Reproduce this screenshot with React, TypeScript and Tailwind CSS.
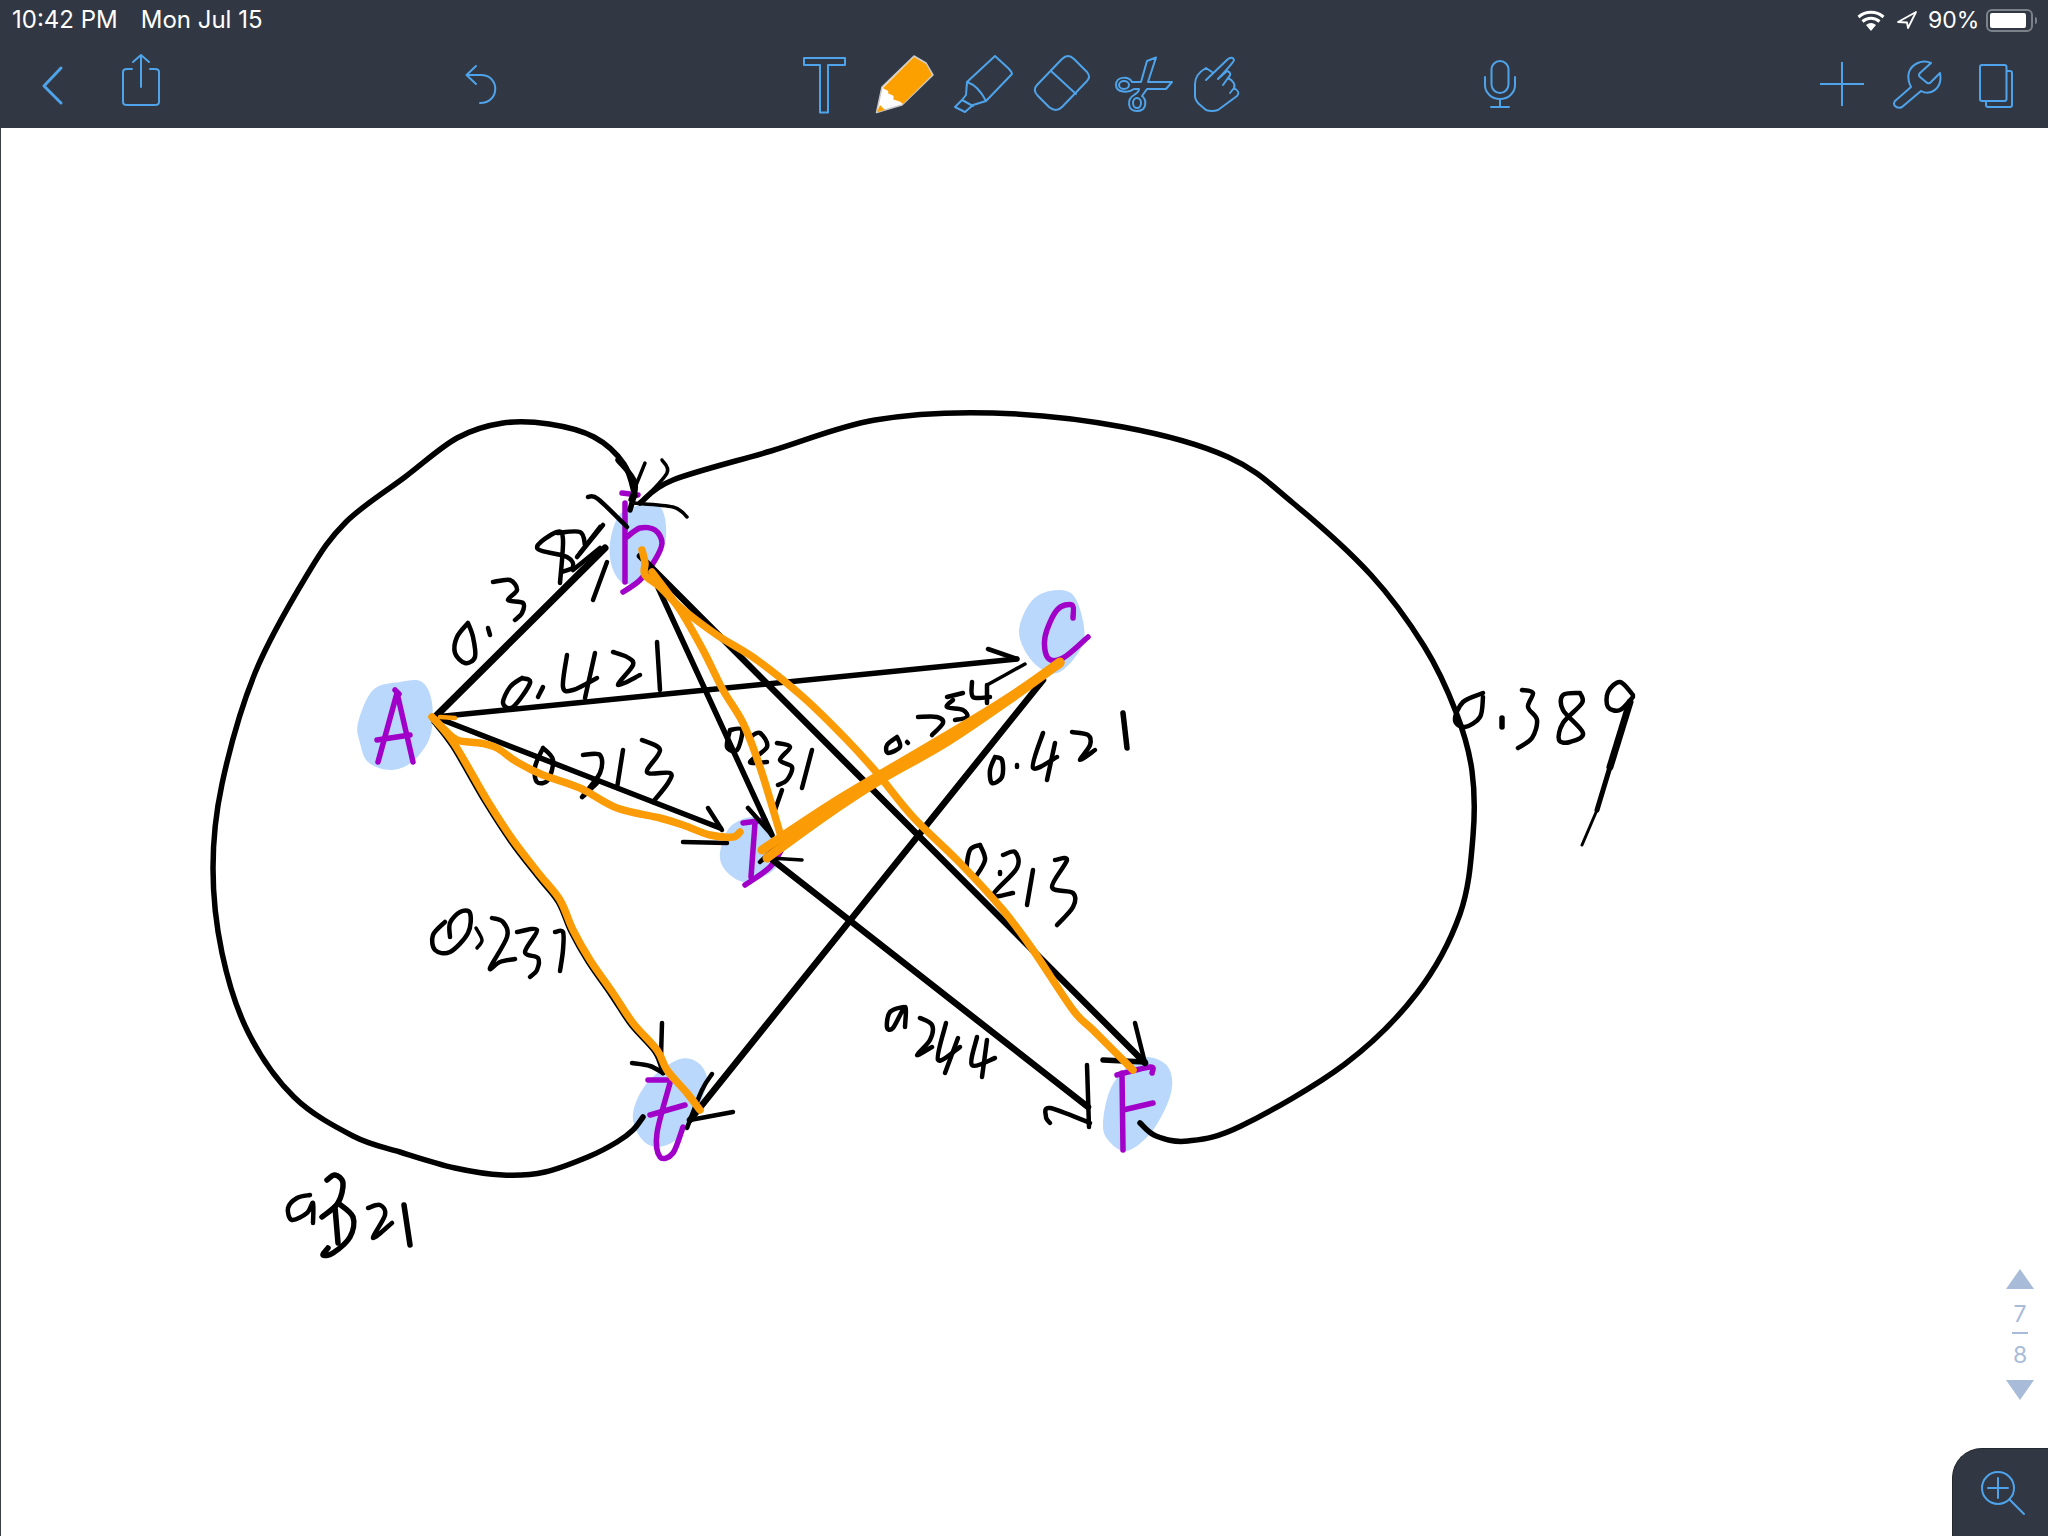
type P = [number, number];
const smooth = (p: P[], close = false): string => {
  const n = p.length;
  const at = (i: number): P => (close ? p[(i + n) % n] : p[Math.max(0, Math.min(n - 1, i))]);
  let d = `M${p[0][0]} ${p[0][1]}`;
  const end = close ? n : n - 1;
  for (let i = 0; i < end; i++) {
    const a = at(i - 1), b = at(i), c = at(i + 1), e = at(i + 2);
    const k = 6;
    d += ` C${(b[0] + (c[0] - a[0]) / k).toFixed(1)} ${(b[1] + (c[1] - a[1]) / k).toFixed(1)} ${(c[0] - (e[0] - b[0]) / k).toFixed(1)} ${(c[1] - (e[1] - b[1]) / k).toFixed(1)} ${c[0]} ${c[1]}`;
  }
  return close ? d + "Z" : d;
};

const blobs: P[][] = [
  [[358,723],[373,690],[400,682],[422,682],[432,703],[430,737],[412,762],[390,770],[368,762],[360,743]],
  [[610,543],[618,517],[633,507],[660,507],[666,537],[655,560],[640,580],[623,583],[612,567]],
  [[1019,633],[1030,603],[1050,591],[1073,595],[1084,627],[1080,650],[1057,673],[1033,662]],
  [[720,853],[730,827],[753,817],[770,827],[780,860],[763,877],[743,882],[725,870]],
  [[633,1113],[647,1083],[677,1060],[697,1062],[707,1080],[697,1110],[680,1137],[657,1147],[640,1137]],
  [[1103,1123],[1110,1090],[1127,1067],[1147,1057],[1168,1067],[1171,1093],[1153,1130],[1127,1151],[1108,1140]],
];

const edges: [P[], number][] = [
  [[[635,496],[624,464],[594,437],[549,424],[503,423],[457,438],[405,477],[346,522],[307,575],[255,673],[222,784],[213,868],[222,953],[248,1032],[294,1097],[353,1136],[400,1152],[455,1168],[503,1175],[545,1172],[590,1156],[617,1142],[633,1130],[643,1117]],5.5],
  [[[640,503],[673,480],[771,451],[875,420],[993,413],[1123,427],[1228,457],[1293,503],[1371,575],[1424,646],[1456,712],[1472,771],[1473,836],[1460,914],[1417,993],[1345,1064],[1241,1126],[1188,1141],[1156,1136],[1140,1123]],5.5],
  [[[435,717],[605,548]],7],
  [[[435,717],[1017,659]],5.5],
  [[[435,717],[720,828]],5.5],
  [[[434,722],[453,747],[485,802],[511,842],[538,877],[558,902],[571,932],[588,962],[611,995],[631,1025],[655,1052],[663,1073]],5],
  [[[1043,680],[690,1120]],6.5],
  [[[650,570],[772,835]],5.5],
  [[[640,556],[1145,1063]],6.5],
  [[[770,858],[1088,1107]],6.5],
  [[[760,862],[833,812]],3],
];

const ink: [P[], number][] = [
  [[[600,527],[580,553]],4.5],[[[607,562],[593,600]],4.5],
  [[[988,649],[1017,659]],4.5],[[[1025,664],[987,685]],3.5],
  [[[708,808],[722,830]],4.5],[[[683,842],[727,843]],4.5],
  [[[662,1023],[661,1057]],4.5],[[[632,1063],[650,1066],[663,1073]],4.5],
  [[[712,1074],[702,1090],[687,1128]],4.5],[[[733,1112],[690,1120]],4.5],
  [[[748,808],[772,835]],4.5],[[[800,823],[760,862]],4.5],[[[802,860],[770,858]],3.5],
  [[[1135,1023],[1145,1063]],4.5],[[[1103,1060],[1145,1062]],5.5],
  [[[1087,1065],[1089,1127]],4.5],[[[1050,1123],[1046,1117],[1050,1108],[1090,1123]],4.5],
  [[[588,497],[598,499],[627,527]],4.5],[[[618,460],[635,483],[630,510]],5.5],[[[645,463],[630,500]],3.5],
  [[[662,460],[667,473],[643,500]],3.5],[[[633,503],[673,507],[687,517]],3.5],
  [[[468,623],[457,637],[455,653],[465,663],[475,657],[473,637],[468,623]],4.5],[[[488,628],[490,635]],4.5],
  [[[493,582],[510,580],[517,590],[508,600],[523,603],[522,613],[515,620]],4.5],
  [[[560,583],[563,540],[557,532],[537,548],[567,557],[573,567],[562,572]],4.5],
  [[[557,533],[580,532],[585,545]],4.5],[[[603,525],[577,557]],4.5],[[[573,570],[600,548]],4.5],
  [[[522,678],[510,687],[503,703],[513,707],[530,683],[522,678]],4.5],[[[543,687],[538,697]],4.5],
  [[[567,655],[563,687],[573,690],[597,678]],4.5],[[[595,653],[585,698]],4.5],
  [[[613,652],[627,657],[633,665],[618,685],[640,675]],4.5],[[[657,642],[660,690]],4.5],
  [[[543,748],[535,767],[537,782],[548,780],[553,760],[543,748]],4.5],[[[563,767],[566,768]],4.5],
  [[[583,755],[600,755],[600,773],[582,797],[597,783]],4.5],[[[623,750],[617,788]],4.5],
  [[[642,740],[660,750],[647,772],[670,773],[668,783],[653,802]],4.5],
  [[[730,730],[727,747],[737,750],[742,730],[730,730]],4.5],
  [[[750,737],[760,733],[767,747],[750,762],[767,762]],4.5],
  [[[777,743],[790,747],[780,760],[792,767],[787,780],[778,785]],4.5],
  [[[812,750],[802,788]],4.5],[[[782,790],[775,810]],4.5],
  [[[897,737],[887,745],[888,753],[900,747],[897,737]],4.5],[[[907,742],[908,743]],4.5],
  [[[918,717],[937,717],[943,723],[932,735]],4.5],
  [[[953,700],[947,707],[963,710],[967,717],[955,720]],4.5],[[[947,697],[963,693]],4.5],
  [[[972,682],[973,697],[990,697]],4.5],[[[987,685],[987,703]],4.5],
  [[[995,757],[990,770],[992,783],[1002,777],[1002,760],[995,757]],4.5],[[[1017,765],[1017,767]],4.5],
  [[[1043,733],[1033,768],[1057,757]],4.5],[[[1055,743],[1047,780]],4.5],
  [[[1072,732],[1088,735],[1090,745],[1080,760],[1095,750]],4.5],[[[1123,713],[1127,748]],5.5],
  [[[980,845],[970,850],[967,870],[975,878]],4.5],[[[980,845],[985,860],[975,878]],4.5],[[[1000,872],[1000,874]],4.5],
  [[[1003,855],[1015,852],[1017,868],[993,895],[1013,893]],4.5],[[[1033,870],[1027,905]],4.5],
  [[[1055,860],[1067,860],[1052,887],[1073,893],[1073,907],[1057,925]],4.5],
  [[[903,1007],[890,1012],[887,1027],[893,1028],[905,1007],[905,1027]],4.5],
  [[[920,1018],[932,1025],[930,1040],[917,1055],[932,1047]],4.5],
  [[[946,1023],[938,1060],[960,1047]],4.5],[[[958,1038],[945,1073]],4.5],
  [[[977,1037],[972,1065],[995,1058]],4.5],[[[987,1040],[982,1077]],4.5],
  [[[445,922],[433,935],[435,950],[450,952],[468,933],[470,913],[460,912],[450,923],[450,937]],4.5],
  [[[476,928],[482,940],[477,948]],3.5],
  [[[492,918],[503,922],[507,937],[490,968],[500,962],[515,959]],4.5],
  [[[517,932],[537,930],[525,952],[538,958],[537,970],[530,977]],4.5],
  [[[555,932],[563,932],[563,950],[560,971]],4.5],
  [[[1483,693],[1463,702],[1455,720],[1465,727],[1480,717],[1483,697]],4.5],[[[1502,718],[1502,727]],5.5],
  [[[1522,690],[1533,693],[1528,707],[1537,720],[1532,738],[1518,748]],4.5],
  [[[1580,693],[1563,695],[1563,710],[1583,733],[1570,742],[1559,740],[1563,723],[1582,703],[1580,693]],4.5],
  [[[1633,695],[1620,682],[1608,692],[1608,707],[1620,710],[1633,697]],4.5],
  [[[1630,702],[1610,767]],7],[[[1610,767],[1597,810]],5],[[[1597,810],[1582,845]],3],
  [[[310,1195],[297,1198],[288,1208],[292,1220],[307,1213],[313,1203],[313,1223]],4.5],
  [[[327,1180],[335,1175],[343,1183],[338,1203],[322,1217]],5.5],
  [[[338,1203],[353,1217],[350,1237],[333,1253],[323,1255],[328,1248]],5.5],[[[335,1207],[338,1243]],5.5],
  [[[368,1208],[380,1205],[385,1215],[373,1238],[392,1223]],4.5],[[[404,1205],[410,1245]],5.5],
];

const purple: P[][] = [
  [[395,690],[399,694]],[[397,693],[378,762]],[[398,697],[413,762]],[[377,740],[410,735]],
  [[625,503],[625,582]],[[622,493],[638,495]],[[627,537],[640,528],[655,530],[662,543],[655,560],[640,580],[623,592]],
  [[1073,618],[1072,605],[1057,610],[1045,637],[1048,658],[1063,658],[1088,637]],
  [[743,823],[765,820]],[[755,823],[751,877]],[[745,885],[770,867],[783,847]],
  [[648,1080],[667,1080]],[[670,1083],[657,1133],[660,1157],[673,1153],[683,1127]],[[650,1115],[685,1105]],
  [[1122,1073],[1123,1150]],[[1117,1075],[1150,1067],[1152,1073]],[[1123,1110],[1153,1103]],
];

const orange: [P[], number][] = [
  [[[642,550],[645,563],[645,575],[660,587],[680,607],[717,635],[757,660],[803,697],[847,740],[877,773],[913,817],[960,863],[1003,910],[1033,950],[1073,1010],[1093,1030],[1133,1070]],7.5],
  [[[652,572],[680,610],[703,650],[723,690],[743,723],[760,767],[780,833]],7.5],
  [[[432,717],[442,727],[457,740],[480,743],[497,748],[517,762],[543,775],[580,788],[617,808],[660,818],[683,825],[710,835],[733,837],[740,832]],7.5],
  [[[435,720],[455,745],[487,800],[513,840],[540,875],[560,900],[573,930],[590,960],[613,993],[633,1023],[657,1050],[667,1070],[687,1093],[700,1110]],7.5],
  [[[1060,662],[1013,695],[963,726],[880,775],[830,805],[780,838],[762,850]],9],
  [[[1060,663],[1010,699],[945,743],[880,780],[825,816],[767,858]],9],
  [[[440,717],[455,718]],4.5],
];

const blue = "#4fa3ea";
const Line = { fill: "none", stroke: blue, strokeWidth: 2, strokeLinecap: "round" as const, strokeLinejoin: "round" as const };

export default function App() {
  return (
    <div className="w-[2048px] h-[1536px] flex flex-col bg-white overflow-hidden" style={{ fontFamily: "Inter, sans-serif" }}>
      <header className="h-[128px] bg-[#313843] flex flex-col shrink-0">
        <div className="h-[40px] flex items-center text-white text-[24px] leading-none pl-[12px] pr-[11px]">
          <span>10:42 PM</span>
          <span className="ml-[23px]">Mon Jul 15</span>
          <svg className="ml-auto w-[34px] h-[26px] shrink-0" viewBox="1856 6 34 26">
            <path d="M1873 30l-5-6a8 8 0 0 1 10 0Z" fill="#fff" />
            <path d="M1864.5 20.5a13 13 0 0 1 17 0M1860.5 16a19 19 0 0 1 25 0" fill="none" stroke="#fff" strokeWidth="3" />
          </svg>
          <svg className="ml-[8px] w-[22px] h-[22px] shrink-0" viewBox="1896 10 22 22">
            <path d="M1916 13L1898 23L1907 23.5L1908 29Z" fill="none" stroke="#fff" strokeWidth="1.8" strokeLinejoin="round" />
          </svg>
          <span className="ml-[10px] w-[50px] text-[23px]">90%</span>
          <div className="ml-[8px] w-[47px] h-[23px] rounded-[6px] border-2 border-[#7d828a] p-[2px]">
            <div className="w-[36px] h-full bg-white rounded-[2px]" />
          </div>
          <div className="ml-[2px] w-[2px] h-[7px] bg-[#7d828a] rounded-r" />
        </div>
        <div className="h-[88px] flex">
          <svg className="ml-[38px] w-[30px] h-[88px] shrink-0" viewBox="38 40 30 88" {...Line} strokeWidth={3}>
            <path d="M61 68L44 86L61 103" />
          </svg>
          <svg className="ml-[50px] w-[46px] h-[88px] shrink-0" viewBox="118 40 46 88" {...Line}>
            <path d="M132 69H127Q123 69 123 72V102Q123 105 127 105H155Q159 105 159 102V72Q159 69 155 69H150M141 87V55M133 62L141 55L149 62" />
          </svg>
          <svg className="ml-[296px] w-[44px] h-[88px] shrink-0" viewBox="460 40 44 88" {...Line}>
            <path d="M476 66L466.500 75L476 84M466.500 75H482C500 76 500 103 480 103" />
          </svg>
          <svg className="ml-[294px] w-[52px] h-[88px] shrink-0" viewBox="798 40 52 88" {...Line}>
            <path d="M804 58H845V65H828V112.500H820V65H804Z" />
          </svg>
          <svg className="ml-[20px] w-[70px] h-[88px] shrink-0" viewBox="870 40 70 88">
            <path d="M882 87L914 56L926 63L933 75L902 105L876.500 112.500Z" fill="#fff" stroke="#c8c8c8" strokeWidth="1.500" strokeLinejoin="round" />
            <path d="M883 88L914 57L926 64L932 75L903 104C899 100 896 101 893 99C896 95 890 95 888 93C890 90 885 90 883 88Z" fill="#fca000" />
            <path d="M877 112L880 105L885 110Z" fill="#fca000" />
          </svg>
          <svg className="ml-[10px] w-[68px] h-[88px] shrink-0" viewBox="950 40 68 88" {...Line}>
            <path d="M995 56L1008 68Q1012 72 1012 74L986 101L973 105L965 112L955 107L962 100L966 95L967 82ZM967 82C976 85 982 93 986 101M962 100L973 106" />
          </svg>
          <svg className="ml-[10px] w-[68px] h-[88px] shrink-0" viewBox="1028 40 68 88" {...Line}>
            <path d="M1062 59Q1068 53 1074 59L1087 72Q1091 77 1087 81L1062 107Q1056 113 1049 107L1038 96Q1032 90 1037 85ZM1051 71L1076 94" />
          </svg>
          <svg className="ml-[14px] w-[68px] h-[88px] shrink-0" viewBox="1110 40 68 88" {...Line}>
            <path d="M1156 57.500L1147 61L1141 82H1132C1129 76 1116 76 1116 85C1116 93 1129 93 1134 89H1139C1139 92 1137 93 1134 95C1127 99 1127 111 1137 111C1147 111 1147 100 1142 96L1147 89H1166L1172 82H1148Z" />
            <ellipse cx="1124" cy="85" rx="5" ry="4" />
            <ellipse cx="1137" cy="103" rx="4" ry="5" />
          </svg>
          <svg className="ml-[12px] w-[54px] h-[88px] shrink-0" viewBox="1190 40 54 88" {...Line}>
            <path d="M1206 80L1228 59Q1233 56 1234 60Q1234 62 1218 79M1212 72L1206 68C1199 72 1195 78 1195 84V96Q1195 100 1199 104L1206 110Q1212 112 1218 110L1237 96Q1241 92 1234 88L1230 93M1234 88C1236 84 1232 80 1228 78L1223 85M1228 78C1232 74 1230 72 1227 71L1218 79" />
          </svg>
          <svg className="ml-[236px] w-[40px] h-[88px] shrink-0" viewBox="1480 40 40 88" {...Line}>
            <rect x="1491.500" y="61" width="17" height="32" rx="8.500" />
            <path d="M1485 77v8a15 14 0 0 0 30 0v-8M1500 99v8M1491 107h18" />
          </svg>
          <svg className="ml-[298px] w-[48px] h-[88px] shrink-0" viewBox="1818 40 48 88" {...Line}>
            <path d="M1842 62V106M1820 84H1864" strokeLinecap="butt" />
          </svg>
          <svg className="ml-[26px] w-[52px] h-[88px] shrink-0" viewBox="1892 40 52 88" {...Line}>
            <path d="M1931 63C1922 59 1912 64 1909 72Q1907 80 1911 87L1895 101Q1893 104 1895 106Q1898 109 1902 107L1921 91C1930 96 1943 89 1940 73L1930 83Q1928 84 1926 82L1920 77Q1918 75 1920 73Z" />
          </svg>
          <svg className="ml-[32px] w-[40px] h-[88px] shrink-0" viewBox="1976 40 40 88" {...Line}>
            <rect x="1980" y="65" width="26.500" height="36" rx="2" />
            <path d="M2007 71H2010Q2012 71 2012 73V105Q2012 107 2010 107H1988Q1986 107 1986 105V102" />
          </svg>
        </div>
      </header>

      <main className="relative flex-1 border-l border-[#3a3f47]">
        <svg className="absolute left-[-1px] top-0 w-[2048px] h-[1408px]" viewBox="0 128 2048 1408" fill="none" strokeLinecap="round" strokeLinejoin="round">
          {blobs.map((b, i) => <path key={i} d={smooth(b, true)} fill="#b9d8fc" />)}
          {purple.map((p, i) => <path key={i} d={smooth(p)} stroke="#a000c8" strokeWidth={5.5} />)}
          {edges.map(([p, w], i) => <path key={i} d={smooth(p)} stroke="#000" strokeWidth={w} />)}
          {ink.map(([p, w], i) => <path key={i} d={smooth(p)} stroke="#000" strokeWidth={w} />)}
          {orange.map(([p, w], i) => <path key={i} d={smooth(p)} stroke="#fb9b05" strokeWidth={w} />)}
        </svg>

        <div className="absolute right-[14px] top-[1141px] w-[28px] flex flex-col items-center text-[#a8bbd8] text-[23px] leading-none">
          <div className="w-0 h-0 border-x-[14px] border-x-transparent border-b-[20px] border-b-[#a8bbd8]" />
          <span className="mt-[14px] h-[23px]">7</span>
          <div className="mt-[6px] w-[16px] h-[2px] bg-[#a8bbd8]" />
          <span className="mt-[10px] h-[23px]">8</span>
          <div className="mt-[13px] w-0 h-0 border-x-[14px] border-x-transparent border-t-[20px] border-t-[#a8bbd8]" />
        </div>

        <div className="absolute right-0 bottom-0 w-[96px] h-[88px] bg-[#313843] rounded-tl-[30px] border-l border-t border-[#23272e]">
          <svg className="w-[96px] h-[88px]" viewBox="1952 1448 96 88" {...Line}>
            <circle cx="1997" cy="1487" r="16" />
            <path d="M1987 1487H2007M1997 1477V1497M2009 1499L2023 1513" />
          </svg>
        </div>
      </main>
    </div>
  );
}
